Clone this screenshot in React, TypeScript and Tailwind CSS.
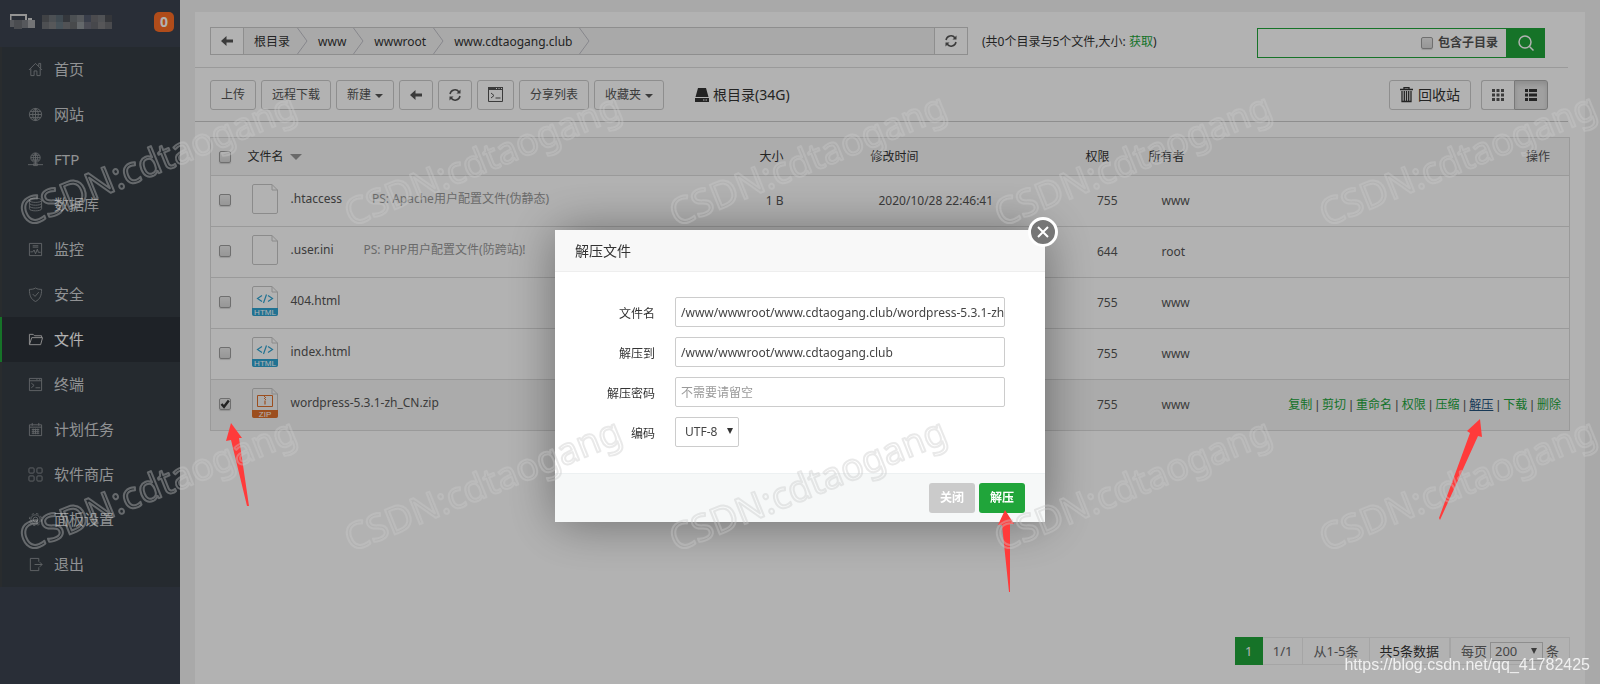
import { useState } from 'react';
import type { ReactNode } from 'react';

interface MenuItem {
  label: string;
  icon: ReactNode;
}

interface FileRow {
  name: string;
  note?: string;
  kind: 'blank' | 'html' | 'zip';
  size: string;
  modified: string;
  mode: string;
  owner: string;
}

const menu: MenuItem[] = [
  { label: '首页', icon: <path d="M1 8.5 8 1.5l7 7M3 7v7.5h3.5v-5h3v5H13V7M11.5 4.5v-3h2v5" /> },
  {
    label: '网站',
    icon: <path d="M8 1.5a6.5 6.5 0 1 0 0 13 6.5 6.5 0 0 0 0-13ZM8 1.5v13M1.5 8h13M2.5 4.7h11M2.5 11.3h11M8 1.5c-4 3.5-4 9.5 0 13M8 1.5c4 3.5 4 9.5 0 13" />,
  },
  {
    label: 'FTP',
    icon: <path d="M8 1a5 5 0 1 0 0 10A5 5 0 0 0 8 1ZM8 1v13M3 6h10M4 3.5h8M4 8.5h8M8 1c-3 3-3 7 0 10M8 1c3 3 3 7 0 10M0 13.5h16M6 12.5h4v2H6z" />,
  },
  {
    label: '数据库',
    icon: <path d="M1.5 3.5c0-3 13-3 13 0s-13 3-13 0ZM1.5 3.5v9c0 3 13 3 13 0v-9M1.5 6.5c0 3 13 3 13 0M1.5 9.5c0 3 13 3 13 0" />,
  },
  { label: '监控', icon: <path d="M1.5 1.5h13v13h-13zM5 4h6M5 5.5h6M2.5 10.5H5l1.5-2 1.5 4 2-5 1 3.5h2.5" /> },
  { label: '安全', icon: <path d="M8 1c2 1.5 4.5 1.5 6.5 1.5C14.5 9 13 13 8 15.5 3 13 1.5 9 1.5 2.5 3.5 2.5 6 2.5 8 1ZM5 7.5 7.5 10 11.5 5.5" /> },
  { label: '文件', icon: <path d="M1.5 13V2.5h4L7 4h7.5v2M1.5 13.5 4 6h11.5l-2 7.5z" /> },
  { label: '终端', icon: <path d="M1.5 1.5h13v13h-13zM1.5 4h13M9 2.8h1M12 2.8h1M3.5 6.5l3 2.5-3 2.5M8 11.5h5" /> },
  { label: '计划任务', icon: <path d="M1.5 3h13v11.5h-13zM1.5 5.5h13M4.5 1v3M11.5 1v3M4 8h8M4 10h8M4 12h8M5.5 7v6M8 7v6M10.5 7v6" /> },
  {
    label: '软件商店',
    icon: (
      <>
        <rect x="1" y="1" width="5.5" height="5.5" rx="1" />
        <rect x="9.5" y="1" width="5.5" height="5.5" rx="1" />
        <rect x="1" y="9.5" width="5.5" height="5.5" rx="1" />
        <rect x="9.5" y="9.5" width="5.5" height="5.5" rx="1" />
      </>
    ),
  },
  {
    label: '面板设置',
    icon: (
      <>
        <circle cx="8" cy="8" r="2.5" />
        <circle cx="8" cy="8" r="5" />
        <circle cx="8" cy="8" r="6.5" strokeDasharray="2.5 2.6" />
      </>
    ),
  },
  { label: '退出', icon: <path d="M11.5 5V1.5h-9v13h9V11M7 8h8M12.5 5.5 15 8l-2.5 2.5" /> },
];

const files: FileRow[] = [
  { name: '.htaccess', note: 'PS: Apache用户配置文件(伪静态)', kind: 'blank', size: '1 B', modified: '2020/10/28 22:46:41', mode: '755', owner: 'www' },
  { name: '.user.ini', note: 'PS: PHP用户配置文件(防跨站)!', kind: 'blank', size: '', modified: '', mode: '644', owner: 'root' },
  { name: '404.html', kind: 'html', size: '', modified: '', mode: '755', owner: 'www' },
  { name: 'index.html', kind: 'html', size: '', modified: '', mode: '755', owner: 'www' },
  { name: 'wordpress-5.3.1-zh_CN.zip', kind: 'zip', size: '', modified: '', mode: '755', owner: 'www' },
];

const actions = ['复制', '剪切', '重命名', '权限', '压缩', '解压', '下载', '删除'];
const crumbs = ['根目录', 'www', 'wwwroot', 'www.cdtaogang.club'];

// Mosaic over the server address
const mosaic = [
  ['#5c5f63', '#6d7379', '#5c6a74', '#4b4f56', '#6c7176', '#7b8085', '#52596a', '#6c6c70', '#73767a', '#4b4e54'],
  ['#6f7276', '#7d7e82', '#667680', '#75767a', '#686a6e', '#90969a', '#6c6e7a', '#66686e', '#7b7b7e', '#6a6c70'],
];

const toolBtn =
  'flex h-[30px] items-center justify-center rounded-[3px] border border-[#ccc] bg-white px-[10px] text-[12px] text-[#555]';
const field =
  'h-[30px] w-full rounded-[2px] border border-[#ccc] bg-white pl-[5px] text-[12px] text-[#444] placeholder:text-[#999]';
const check =
  'size-[12px] shrink-0 appearance-none rounded-[2px] border border-[#a0a0a0] bg-linear-to-b from-[#ececec] to-[#d8d8d8] shadow-[0_1px_1px_rgba(0,0,0,0.15)]';

function ArrowLeft() {
  return (
    <svg viewBox="0 0 12 10" className="h-[10px] w-[12px]" fill="#555" aria-hidden="true">
      <path d="M0 5 5.5 0v3.5H12v3H5.5V10z" />
    </svg>
  );
}

function Refresh() {
  return (
    <svg viewBox="0 0 12 12" className="size-[12px]" fill="none" stroke="#555" strokeWidth="1.5" aria-hidden="true">
      <path d="M1 5a5 5 0 0 1 9-2M11 7a5 5 0 0 1-9 2" />
      <path d="M11.5.5v4h-4zM.5 11.5v-4h4z" fill="#555" stroke="none" />
    </svg>
  );
}

function Caret() {
  return <span className="mt-[2px] ml-1 border-x-4 border-t-4 border-x-transparent border-t-[#555]" />;
}

function CheckBox({ id, label, defaultChecked }: { id: string; label: string; defaultChecked?: boolean }) {
  return (
    <span className="relative flex size-[12px]">
      <input id={id} type="checkbox" aria-label={label} defaultChecked={defaultChecked} className={`peer ${check}`} />
      <svg
        viewBox="0 0 12 12"
        className="pointer-events-none absolute inset-0 hidden size-[12px] peer-checked:block"
        fill="none"
        stroke="#333"
        strokeWidth="2.4"
        aria-hidden="true"
      >
        <path d="M2.5 6 5 8.8 9.8 2.5" />
      </svg>
    </span>
  );
}

function FileIcon({ kind }: { kind: FileRow['kind'] }) {
  const color = kind === 'zip' ? '#e0702c' : '#2fa4d2';
  return (
    <svg viewBox="0 0 26 30" className="h-[30px] w-[26px] shrink-0" fill="none" aria-hidden="true">
      <path d="M2 .5h18L25.5 6v22a1.5 1.5 0 0 1-1.5 1.5H2A1.5 1.5 0 0 1 .5 28V2A1.5 1.5 0 0 1 2 .5ZM20 .5V6h5.5" stroke="#c8c8c8" />
      {kind !== 'blank' && (
        <>
          <path d="M0 22h26v6a2 2 0 0 1-2 2H2a2 2 0 0 1-2-2z" fill={color} />
          <text x="13" y="29" textAnchor="middle" fontSize="8" fill="#fff" className="font-['Liberation_Sans',sans-serif]">
            {kind === 'zip' ? 'ZIP' : 'HTML'}
          </text>
        </>
      )}
      {kind === 'html' && <path d="M10 9.5 5.5 12.5 10 15.5M16 9.5l4.5 3-4.5 3M14.5 8.5l-3 8.5" stroke={color} strokeWidth="1.2" />}
      {kind === 'zip' && (
        <>
          <path d="M5.5 7.5h15v11h-15z" stroke={color} />
          <path d="M12 8.5h1M13 9.5h1M12 10.5h1M13 11.5h1M13 12.5v4" stroke={color} strokeWidth="1.2" />
        </>
      )}
    </svg>
  );
}

function Sidebar() {
  return (
    <aside className="w-[180px] shrink-0 bg-[#3c434f]">
      <div className="flex h-[47px] items-center pr-[6px] pb-[4px] pl-[10px]">
        <svg viewBox="0 0 26 16" className="h-[16px] w-[26px]" fill="none" aria-hidden="true">
          <path d="M.5 9V1h15.5v5M18 5h4" stroke="#d4d4d4" strokeWidth="2" />
          <path d="M0 6h6v7H0z" fill="#7c7f84" />
          <path d="M4 6h8v9H4z" fill="#6a6d73" />
          <path d="M12 6h6v8h-6z" fill="#7c7f84" />
          <path d="M18 6h7v8h-7z" fill="#a5a7aa" />
        </svg>
        <div className="ml-[6px] grid grid-cols-10">
          {mosaic.flat().map((c, i) => (
            <span key={i} className="size-[7px]" style={{ backgroundColor: c }} />
          ))}
        </div>
        <span className="ml-auto flex size-[20px] items-center justify-center rounded-[5px] bg-[#fc6d26] text-[14px] font-bold text-white">
          0
        </span>
      </div>
      <nav>
        <ul>
          {menu.map((item) => {
            const active = item.label === '文件';
            return (
              <li key={item.label}>
                <a
                  href="#"
                  className={`flex h-[45px] items-center gap-[11px] border-l-2 pl-[26px] text-[15px] ${
                    active ? 'border-[#20a53a] bg-[#2c3138] text-white' : 'border-[#3b3f42] bg-[#353d44] text-[#d0d2d4]'
                  }`}
                >
                  <svg
                    viewBox="0 0 16 16"
                    className={`size-[15px] ${active ? 'text-[#d0d0d0]' : 'text-[#8c9094]'}`}
                    fill="none"
                    stroke="currentColor"
                    aria-hidden="true"
                  >
                    {item.icon}
                  </svg>
                  {item.label}
                </a>
              </li>
            );
          })}
        </ul>
      </nav>
    </aside>
  );
}

function PathBar() {
  return (
    <div className="mr-[17px] flex h-[56px] items-start border-b border-[#ddd] pt-[15px] pr-[23px] pl-[15px]">
      <div className="flex h-[28px] w-[758px] border border-[#ccc] bg-[#f3f3f3]">
        <button type="button" aria-label="返回" className="flex w-[33px] items-center justify-center border-r border-[#ccc] bg-white">
          <ArrowLeft />
        </button>
        <ul className="flex flex-1 text-[12px] text-[#333]">
          {crumbs.map((c) => (
            <li key={c} className="flex items-center pl-[10px]">
              <a href="#" className="pt-[2px]">{c}</a>
              <svg viewBox="0 0 11 26" className="ml-[7px] h-[26px] w-[11px]" fill="none" stroke="#c0c0c8" aria-hidden="true">
                <path d="M.5 0 10 13 .5 26" />
              </svg>
            </li>
          ))}
        </ul>
        <button type="button" aria-label="刷新" className="flex w-[33px] items-center justify-center border-l border-[#ccc] bg-white">
          <Refresh />
        </button>
      </div>
      <p className="ml-[14px] text-[12px] leading-[30px] text-[#333]">
        (共0个目录与5个文件,大小:{' '}
        <a href="#" className="text-[#20a53a]">
          获取
        </a>
        )
      </p>
      <form className="ml-auto mt-px flex h-[30px]">
        <div className="flex w-[249px] items-center border border-r-0 border-[#20a53a]">
          <input type="text" aria-label="搜索文件" className="min-w-0 flex-1 px-2 text-[12px] outline-none" />
          <CheckBox id="sub" label="包含子目录" />
          <label htmlFor="sub" className="mr-[8px] ml-[5px] text-[12px] font-bold text-[#555]">
            包含子目录
          </label>
        </div>
        <button type="button" aria-label="搜索" className="flex w-[39px] items-center justify-center bg-[#20a53a]">
          <svg viewBox="0 0 16 16" className="size-[16px]" fill="none" stroke="#fff" strokeWidth="1.5" aria-hidden="true">
            <circle cx="7" cy="7" r="6" />
            <path d="m11.5 11.5 4 4" />
          </svg>
        </button>
      </form>
    </div>
  );
}

function Toolbar() {
  return (
    <div className="mr-[17px] flex h-[54px] items-center gap-[5px] border-b border-[#ccc] pr-[20px] pl-[15px]">
      <button type="button" className={toolBtn}>上传</button>
      <button type="button" className={toolBtn}>远程下载</button>
      <button type="button" className={toolBtn}>新建<Caret /></button>
      <button type="button" aria-label="后退" className={toolBtn}><ArrowLeft /></button>
      <button type="button" aria-label="刷新列表" className={toolBtn}><Refresh /></button>
      <button type="button" aria-label="终端" className={toolBtn}>
        <svg viewBox="0 0 15 15" className="size-[15px]" fill="none" stroke="#555" aria-hidden="true">
          <path d="M.5 1.5h14v13H.5zM3 6l3 2.5L3 11M7.5 11h5" />
          <path d="M0 1.5h15" strokeWidth="3" />
          <path d="M8 1.5h1M10.5 1.5h1M13 1.5h1" stroke="#fff" />
        </svg>
      </button>
      <button type="button" className={toolBtn}>分享列表</button>
      <button type="button" className={toolBtn}>收藏夹<Caret /></button>
      <span className="ml-[26px] flex items-center gap-[4px] text-[14px] text-[#333]">
        <svg viewBox="0 0 14 14" className="size-[14px]" fill="#333" aria-hidden="true">
          <path d="M3 0h8l2.5 9H.5zM0 10h14v4H0z" />
          <path d="M8 12h1.500M10.500 12H12" stroke="#fff" />
        </svg>
        根目录(34G)
      </span>
      <button type="button" className="ml-auto flex h-[30px] items-center gap-[5px] rounded-[3px] border border-[#ccc] px-[10px] text-[14px] text-[#333]">
        <svg viewBox="0 0 13 16" className="h-[16px] w-[13px]" fill="none" stroke="#333" aria-hidden="true">
          <path d="M0 2.500h13M4 2V.5h5V2" strokeWidth="1.300" />
          <path d="M2 4v10.500h9V4M4.300 4v10M6.500 4v10M8.700 4v10" strokeWidth="1.300" />
        </svg>
        回收站
      </button>
      <div className="ml-[5px] flex">
        <button type="button" aria-label="图标视图" className="flex h-[30px] w-[33px] items-center justify-center rounded-l-[3px] border border-r-0 border-[#ccc]">
          <svg viewBox="0 0 12 12" className="size-[12px]" fill="#555" aria-hidden="true">
            <path d="M0 0h3v3H0zM4.500 0h3v3h-3zM9 0h3v3H9zM0 4.500h3v3H0zM4.500 4.500h3v3h-3zM9 4.500h3v3H9zM0 9h3v3H0zM4.500 9h3v3h-3zM9 9h3v3H9z" />
          </svg>
        </button>
        <button type="button" aria-label="列表视图" className="flex h-[30px] w-[34px] items-center justify-center rounded-r-[3px] border border-[#adadad] bg-[#e6e6e6] shadow-[inset_0_3px_5px_rgba(0,0,0,0.125)]">
          <svg viewBox="0 0 12 12" className="size-[12px]" fill="#333" aria-hidden="true">
            <path d="M0 0h3v3H0zM4 0h8v3H4zM0 4.500h3v3H0zM4 4.500h8v3H4zM0 9h3v3H0zM4 9h8v3H4z" />
          </svg>
        </button>
      </div>
    </div>
  );
}

function FileTable() {
  return (
    <div className="mt-[15px] px-[15px]">
      <table className="w-full table-fixed border-collapse border border-[#ddd] text-left text-[12px] text-[#555]">
        <colgroup>
          <col className="w-[37px]" />
          <col className="w-[428px]" />
          <col className="w-[117px]" />
          <col className="w-[230px]" />
          <col className="w-[98px]" />
          <col className="w-[80px]" />
          <col />
        </colgroup>
        <thead>
          <tr className="h-[38px] bg-[#f6f6f6] text-[#333]">
            <th className="pl-[8px] font-normal"><CheckBox id="all" label="全选" /></th>
            <th className="font-normal">
              <span className="flex items-center gap-[6px]">
                文件名
                <span className="border-x-6 border-t-6 border-x-transparent border-t-[#999]" />
              </span>
            </th>
            <th className="pr-[9px] text-right font-normal">大小</th>
            <th className="pl-[78px] font-normal">修改时间</th>
            <th className="pr-[11px] text-right font-normal">权限</th>
            <th className="pl-[28px] font-normal whitespace-nowrap">所有者</th>
            <th className="pr-[19px] text-right font-normal text-[#555]">操作</th>
          </tr>
        </thead>
        <tbody>
          {files.map((f) => (
            <tr key={f.name} className={`h-[51px] border-t border-[#ddd] ${f.kind === 'zip' ? 'bg-[#f5f5f5]' : 'bg-white'}`}>
              <td className="pb-[3px] pl-[8px]"><CheckBox id={f.name} label={f.name} defaultChecked={f.kind === 'zip'} /></td>
              <td className="pb-[4px]">
                <div className="flex items-center pl-[4px]">
                  <FileIcon kind={f.kind} />
                  <a href="#" className="ml-[13px]">{f.name}</a>
                  {f.note && <span className="ml-[30px] text-[#999]">{f.note}</span>}
                </div>
              </td>
              <td className="pr-[9px] text-right">{f.size}</td>
              <td className="pl-[86px]">{f.modified}</td>
              <td className="pr-[3px] text-right">{f.mode}</td>
              <td className="pl-[41px]">{f.owner}</td>
              <td className="pr-[8px] text-right font-['Liberation_Sans','Noto_Sans_CJK_SC',sans-serif]">
                {f.kind === 'zip' &&
                  actions.map((a, i) => (
                    <span key={a}>
                      {i > 0 && ' | '}
                      <a href="#" className={a === '解压' ? 'text-[#23527c] underline' : 'text-[#20a53a]'}>{a}</a>
                    </span>
                  ))}
              </td>
            </tr>
          ))}
        </tbody>
      </table>
    </div>
  );
}

function Pager() {
  return (
    <div className="mt-auto mr-[15px] mb-[19px] flex h-[28px] self-end text-[13px] leading-[26px] text-[#666]">
      <span className="w-[28px] bg-[#20a53a] text-center leading-[28px] text-white">1</span>
      <span className="border-y border-r border-[#ececec] px-[10px]">1/1</span>
      <span className="border-y border-r border-[#ececec] px-[10px]">从1-5条</span>
      <span className="border-y border-r-2 border-[#ececec] px-[10px] text-[#333]">共5条数据</span>
      <label className="flex items-center gap-[3px] border-y border-r border-[#ececec] px-[10px]">
        每页
        <span className="relative flex">
          <select className="h-[19px] w-[53px] appearance-none border border-[#ccc] pl-[4px] text-[13px] leading-[17px]">
            <option>200</option>
          </select>
          <span className="pointer-events-none absolute top-[6px] right-[6px] border-x-3 border-t-6 border-x-transparent border-t-[#555]" />
        </span>
        条
      </label>
    </div>
  );
}

function ExtractDialog() {
  const [path, setPath] = useState('/www/wwwroot/www.cdtaogang.club/wordpress-5.3.1-zh_CN.zip');
  const [target, setTarget] = useState('/www/wwwroot/www.cdtaogang.club');
  const row = 'grid grid-cols-[100px_1fr] items-center gap-[20px] text-[12px] text-[#333]';
  const caption = 'pt-[4px] text-right';

  return (
    <div className="fixed inset-0 flex items-start justify-center bg-black/30 pt-[230px]">
      <div role="dialog" aria-labelledby="dlg-title" className="relative w-[490px] rounded-[2px] bg-white shadow-[1px_1px_50px_rgba(0,0,0,0.4)]">
        <h2 id="dlg-title" className="h-[42px] border-b border-[#eee] bg-[#f8f8f8] pl-[20px] text-[14px] leading-[41px] text-[#333]">
          解压文件
        </h2>
        <button type="button" aria-label="关闭窗口" className="absolute -top-[13px] -right-[13px] flex size-[30px] items-center justify-center rounded-full border-3 border-white bg-[#767676]">
          <svg viewBox="0 0 12 12" className="size-[12px]" stroke="#fff" strokeWidth="2" aria-hidden="true">
            <path d="m1 1 10 10M11 1 1 11" />
          </svg>
        </button>
        <form>
          <div className="flex flex-col gap-[10px] pt-[25px] pr-[40px] pb-[26px]">
            <div className={row}>
              <label htmlFor="path" className={caption}>文件名</label>
              <input id="path" type="text" value={path} onChange={(e) => setPath(e.target.value)} className={field} />
            </div>
            <div className={row}>
              <label htmlFor="target" className={caption}>解压到</label>
              <input id="target" type="text" value={target} onChange={(e) => setTarget(e.target.value)} className={field} />
            </div>
            <div className={row}>
              <label htmlFor="pwd" className={caption}>解压密码</label>
              <input id="pwd" type="text" placeholder="不需要请留空" className={field} />
            </div>
            <div className={row}>
              <label htmlFor="enc" className={caption}>编码</label>
              <span className="relative flex w-[64px]">
                <select id="enc" className="h-[30px] w-full appearance-none rounded-[2px] border border-[#ccc] pl-[9px] text-[12px] text-[#444]">
                  <option>UTF-8</option>
                </select>
                <span className="pointer-events-none absolute top-[11px] right-[6px] border-x-3 border-t-6 border-x-transparent border-t-[#333]" />
              </span>
            </div>
          </div>
          <div className="flex h-[49px] items-center justify-end gap-[4px] border-t border-[#edf1f2] bg-[#f6f8f8] pr-[20px] pb-[1px] text-[12px] font-bold text-white">
            <button type="button" className="h-[30px] w-[46px] rounded-[3px] bg-[#cbcbcb]">关闭</button>
            <button type="button" className="h-[30px] w-[46px] rounded-[3px] bg-[#20a53a]">解压</button>
          </div>
        </form>
      </div>
    </div>
  );
}

// Slanted outline text repeated over the page, plus the red pointer arrows
function Annotations() {
  const cols = [0, 325, 650, 975, 1300];
  return (
    <div className="pointer-events-none fixed inset-0 overflow-hidden">
      <svg width="1600" height="684" viewBox="0 0 1600 684" aria-hidden="true">
        <g fill="#ff3b3b">
          <path d="M231 423 226 441 231 440 247 506 249 506 239 438 242 438Z" />
          <path d="M1480 419 1467 431 1470 433 1439 518 1440 520 1478 436 1482 437Z" />
          <path d="M1005 510 998 525 1002 525 1009 592 1010 592 1010 524 1014 524Z" />
        </g>
        <g
          fill="none"
          stroke="#c9c9c9"
          strokeOpacity="0.4"
          strokeWidth="2"
          strokeLinejoin="round"
          fontSize="37"
          className="font-['Noto_Sans',sans-serif]"
        >
          {[0, 325].map((y) =>
            cols.map((x) => (
              <text key={`${x}-${y}`} transform={`translate(${x + 26} ${y + 227}) rotate(-22)`}>
                CSDN:cdtaogang
              </text>
            ))
          )}
        </g>
      </svg>
      <span className="absolute right-[10px] bottom-[8px] font-['Liberation_Sans',sans-serif] text-[16px] leading-[22px] text-white/80">
        https://blog.csdn.net/qq_41782425
      </span>
    </div>
  );
}

export default function App() {
  return (
    <div className="flex min-h-screen bg-[#f3f3f3] font-['Noto_Sans','Noto_Sans_CJK_SC',sans-serif]">
      <Sidebar />
      <main className="flex min-w-0 flex-1 px-[15px] pt-[12px]">
        <section className="flex min-w-0 flex-1 flex-col bg-white">
          <PathBar />
          <Toolbar />
          <FileTable />
          <Pager />
        </section>
      </main>
      <ExtractDialog />
      <Annotations />
    </div>
  );
}
